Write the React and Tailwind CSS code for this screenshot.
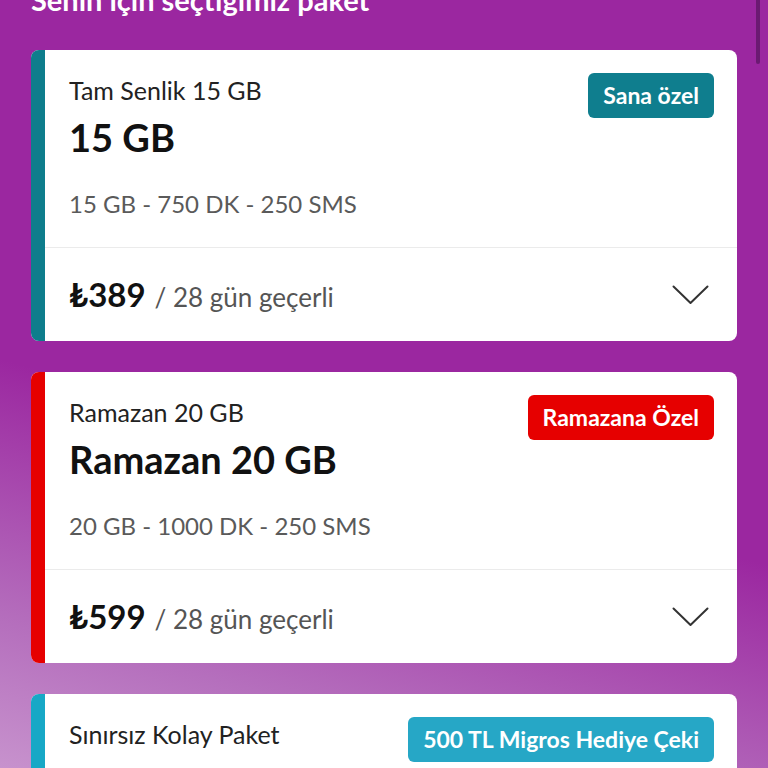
import React from 'react';

const packages = [
  {
    id: 1,
    name: 'Tam Senlik 15 GB',
    headline: '15 GB',
    details: '15 GB - 750 DK - 250 SMS',
    price: '389',
    badge: 'Sana özel',
    accent: 'bg-[#0e7d8c]',
    badgeBg: 'bg-[#0f7e8e]',
  },
  {
    id: 2,
    name: 'Ramazan 20 GB',
    headline: 'Ramazan 20 GB',
    details: '20 GB - 1000 DK - 250 SMS',
    price: '599',
    badge: 'Ramazana Özel',
    accent: 'bg-[#e60000]',
    badgeBg: 'bg-[#e60000]',
  },
  {
    id: 3,
    name: 'Sınırsız Kolay Paket',
    headline: 'SINIRSIZ GB',
    details: 'Sınırsız GB - 1000 DK - 250 SMS',
    price: '749',
    badge: '500 TL Migros Hediye Çeki',
    accent: 'bg-[#17a8c6]',
    badgeBg: 'bg-[#26a7c6]',
  },
];

function Chevron() {
  return (
    <svg width="37" height="20" viewBox="0 0 37 20" fill="none">
      <path d="M1.5 1.5 L18.5 18 L35.5 1.5" stroke="#333" strokeWidth="2" strokeLinecap="round" strokeLinejoin="round" />
    </svg>
  );
}

function PackageCard({ pkg }) {
  return (
    <div className="flex overflow-hidden rounded-lg bg-white">
      <div className={`w-[14px] shrink-0 ${pkg.accent}`} />
      <div className="min-w-0 flex-1">
        <div className="h-[198px] border-b border-[#ebebeb] pl-6 pr-[23px]">
          <div className="flex items-start justify-between">
            <div className="pt-[25px]">
              <div className="text-[25px] leading-[30px] text-[#222]">{pkg.name}</div>
              <div className="mt-[9px] text-[38px] font-bold leading-[46px] text-[#111]">{pkg.headline}</div>
            </div>
            <div className={`mt-[23px] rounded-md px-[15px] text-[23px] font-bold leading-[45px] text-white ${pkg.badgeBg}`}>
              {pkg.badge}
            </div>
          </div>
          <div className="mt-[29px] text-[24px] leading-[30px] text-[#5a5a5a]">{pkg.details}</div>
        </div>
        <div className="flex h-[93px] items-center justify-between pl-6 pr-[28px]">
          <div className="flex items-baseline gap-[9px]">
            <span className="text-[33px] font-bold text-[#111]">₺{pkg.price}</span>
            <span className="text-[26px] text-[#555]">/ 28 gün geçerli</span>
          </div>
          <Chevron />
        </div>
      </div>
    </div>
  );
}

export default function App() {
  return (
    <div
      className="relative h-[768px] w-[768px] overflow-hidden bg-[linear-gradient(195deg,#9b27a0_0%,#9b27a0_58%,#b56fbd_85%,#c792cd_100%)]"
      style={{ fontFamily: 'Lato, "Noto Sans", "DejaVu Sans", sans-serif' }}
    >
      <div className="absolute right-[8px] top-0 h-[64px] w-[4px] rounded-b bg-[#6b1a72]" />
      <div className="px-[31px]">
        <h2 className="mt-[-16px] text-[29px] font-bold leading-[32px] text-white">Senin için seçtiğimiz paket</h2>
        <div className="mt-[34px] flex flex-col gap-[31px]">
          {packages.map((pkg) => (
            <PackageCard key={pkg.id} pkg={pkg} />
          ))}
        </div>
      </div>
    </div>
  );
}
